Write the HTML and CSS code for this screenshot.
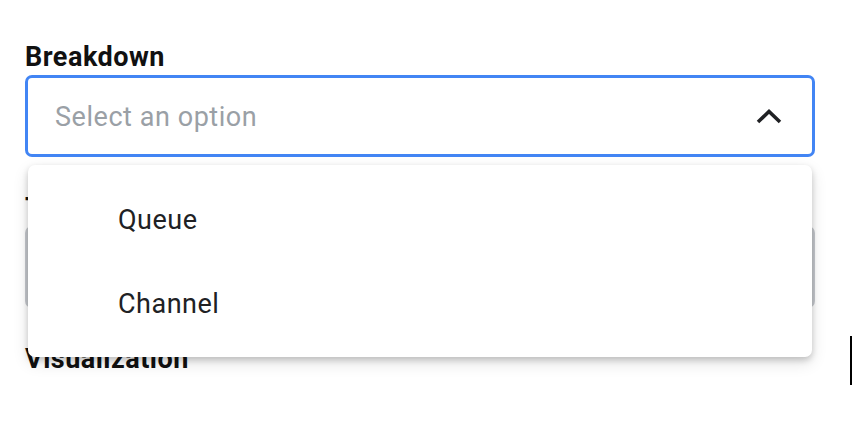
FILE: index.html
```html
<!DOCTYPE html>
<html>
<head>
<meta charset="utf-8">
<link rel="stylesheet" href="styles.css">
</head>
<body>
<div class="page">
  <form class="form">
    <div class="field">
      <label class="label">Breakdown</label>
      <div class="select-wrap">
        <div class="select select-open">
          <span class="placeholder">Select an option</span>
          <svg class="chevron" width="26" height="16" viewBox="0 0 26 16"><polyline points="2,14 13,3.5 24,14" fill="none" stroke="#202124" stroke-width="3.6" stroke-linejoin="miter"/></svg>
        </div>
        <ul class="menu">
          <li class="menu-item">Queue</li>
          <li class="menu-item">Channel</li>
        </ul>
      </div>
    </div>
    <div class="field">
      <label class="label">Time range</label>
      <div class="select select-gray"></div>
    </div>
    <div class="field">
      <label class="label">Visualization</label>
    </div>
  </form>
  <div class="caret"></div>
</div>
</body>
</html>
```

FILE: styles.css
```css
html, body {
  margin: 0;
  padding: 0;
  background: #ffffff;
}
body {
  font-family: Roboto, "Liberation Sans", Arial, sans-serif;
  width: 852px;
  height: 434px;
  overflow: hidden;
}
.page {
  display: flex;
  width: 852px;
  height: 434px;
}
.form {
  width: 790px;
  padding: 42px 0 0 25px;
  display: flex;
  flex-direction: column;
  gap: 36px;
}
.field {
  display: flex;
  flex-direction: column;
  gap: 2px;
}
.label {
  font-size: 27px;
  font-weight: 700;
  letter-spacing: 0.5px;
  color: #111111;
  line-height: 31px;
}
.select-wrap {
  position: relative;
}
.select {
  box-sizing: border-box;
  height: 82px;
  border-radius: 7px;
  display: flex;
  align-items: center;
  justify-content: space-between;
  padding: 0 30px 0 27px;
}
.select-open {
  border: 3px solid #4285f4;
}
.select-gray {
  border: 3px solid #c6c9ce;
  background: #ffffff;
}
.placeholder {
  font-size: 27px;
  letter-spacing: 0.55px;
  color: #9aa0a6;
  padding-top: 2px;
}
.chevron {
  display: block;
}
.menu {
  position: absolute;
  top: 90px;
  left: 3px;
  width: 784px;
  box-sizing: border-box;
  margin: 0;
  padding: 13px 0 11px;
  list-style: none;
  background: #ffffff;
  border-radius: 7px;
  box-shadow: 0 3px 6px rgba(0,0,0,0.18), 0 6px 16px rgba(0,0,0,0.12);
  z-index: 2;
}
.menu-item {
  height: 84px;
  display: flex;
  align-items: center;
  padding-left: 90px;
  font-size: 27px;
  letter-spacing: 0.5px;
  color: #202124;
}
.caret {
  margin-top: 336px;
  margin-left: 35px;
  width: 2px;
  height: 49px;
  background: #000000;
}
```
